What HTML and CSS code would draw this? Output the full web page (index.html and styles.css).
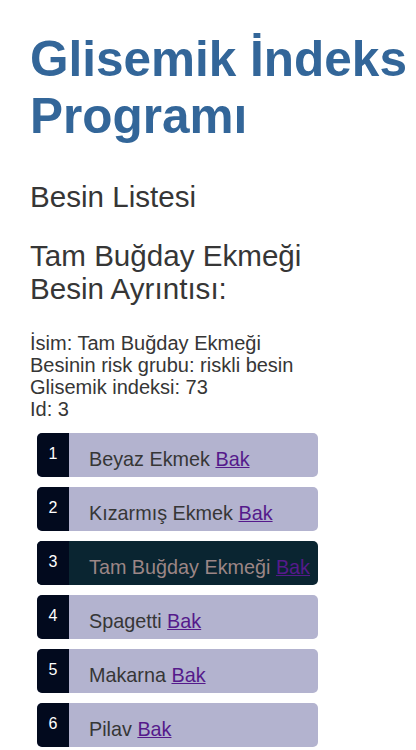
FILE: index.html
```html
<!DOCTYPE html>
<html lang="tr">
<head>
<meta charset="utf-8">
<title>Glisemik İndeks Programı</title>
<link rel="stylesheet" href="styles.css">
</head>
<body>
<main class="page">
  <h1 class="title">Glisemik İndeks Programı</h1>
  <h2 class="subtitle">Besin Listesi</h2>
  <h3 class="detail-title"><span class="line">Tam Buğday Ekmeği</span> <span class="line">Besin Ayrıntısı:</span></h3>
  <div class="details">
    <div>İsim: Tam Buğday Ekmeği</div>
    <div>Besinin risk grubu: riskli besin</div>
    <div>Glisemik indeksi: 73</div>
    <div>Id: 3</div>
  </div>
  <ul class="list">
    <li class="item"><span class="num">1</span><span class="name">Beyaz Ekmek <a href="#">Bak</a></span></li>
    <li class="item"><span class="num">2</span><span class="name">Kızarmış Ekmek <a href="#">Bak</a></span></li>
    <li class="item active"><span class="num">3</span><span class="name">Tam Buğday Ekmeği <a href="#">Bak</a></span></li>
    <li class="item"><span class="num">4</span><span class="name">Spagetti <a href="#">Bak</a></span></li>
    <li class="item"><span class="num">5</span><span class="name">Makarna <a href="#">Bak</a></span></li>
    <li class="item"><span class="num">6</span><span class="name">Pilav <a href="#">Bak</a></span></li>
  </ul>
</main>
</body>
</html>
```
FILE: styles.css
```css
html, body {
  margin: 0;
  padding: 0;
  background: #ffffff;
}
.page {
  padding: 30px 0 0 30px;
  font-family: "Liberation Sans", Arial, sans-serif;
  color: #363636;
}
.title {
  margin: 0;
  max-width: 380px;
  font-size: 49.5px;
  line-height: 57px;
  font-weight: bold;
  color: #336699;
}
.subtitle {
  margin: 36px 0 0;
  font-size: 29.6px;
  line-height: 34px;
  font-weight: normal;
}
.detail-title {
  margin: 25px 0 0;
  font-size: 29.6px;
  line-height: 33px;
  font-weight: normal;
}
.line {
  display: block;
}
.details {
  margin-top: 27px;
  font-size: 20px;
  line-height: 22px;
}
.list {
  list-style: none;
  margin: 13px 0 0 7px;
  padding: 0;
  width: 281px;
  display: flex;
  flex-direction: column;
  gap: 10px;
}
.item {
  display: flex;
  height: 44px;
  border-radius: 5px;
  overflow: hidden;
  background: #b3b3cf;
}
.num {
  width: 32px;
  flex: none;
  background: #020a1e;
  color: #ffffff;
  font-size: 16px;
  text-align: center;
  padding-top: 12px;
  box-sizing: border-box;
}
.name {
  padding: 15px 0 0 20px;
  font-size: 19.8px;
  line-height: 23px;
  white-space: nowrap;
}
.name a {
  color: #551a8b;
}
.active {
  background: #0a2531;
}
.active .name {
  color: #9c8686;
}
```
